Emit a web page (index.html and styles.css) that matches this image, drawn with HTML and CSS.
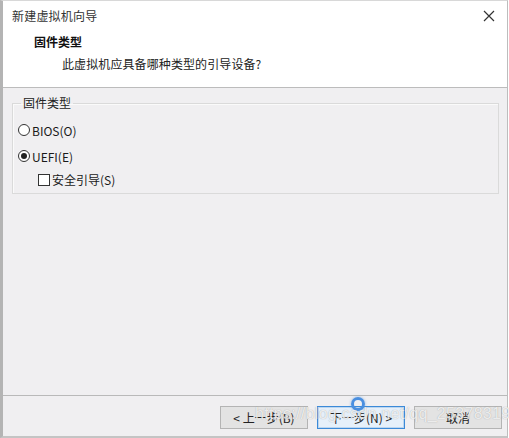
FILE: index.html
```html
<!DOCTYPE html>
<html lang="zh-CN">
<head>
<meta charset="utf-8">
<title>新建虚拟机向导</title>
<link rel="stylesheet" href="styles.css">
</head>
<body>
<div class="window">
  <div class="titlebar">
    <span class="title">新建虚拟机向导</span>
    <svg class="close" width="12" height="12" viewBox="0 0 12 12"><path d="M1 1 L11 11 M11 1 L1 11" stroke="#333" stroke-width="1.2" fill="none"/></svg>
  </div>
  <div class="header">
    <div class="h-title">固件类型</div>
    <div class="h-sub">此虚拟机应具备哪种类型的引导设备?</div>
  </div>
  <div class="content">
    <fieldset class="group">
      <legend>固件类型</legend>
      <div class="opt"><span class="radio"></span>BIOS(O)</div>
      <div class="opt"><span class="radio checked"></span>UEFI(E)</div>
      <div class="opt sub"><span class="check"></span>安全引导(S)</div>
    </fieldset>
  </div>
  <div class="footer">
    <button class="btn">&lt; 上一步(B)</button>
    <button class="btn primary">下一步(N) &gt;</button>
    <button class="btn">取消</button>
    <span class="cursor"></span>
    <span class="watermark">https://blog.csdn.net/qq_25378319</span>
  </div>
</div>
</body>
</html>
```

FILE: styles.css
```css
* { box-sizing: border-box; }
html, body { margin: 0; padding: 0; }
body {
  width: 509px;
  height: 438px;
  overflow: hidden;
  background: #ffffff;
  font-family: "Noto Sans CJK SC", "Noto Sans", sans-serif;
  font-size: 12px;
  color: #1a1a1a;
}
.window {
  width: 508px;
  height: 438px;
  display: flex;
  flex-direction: column;
  border-left: 3px solid #b4b4b4;
  border-right: 1px solid #bdbdbd;
  border-bottom: 2px solid #c4c4c4;
  border-top: 1px solid #d8d8d8;
  background: #f0eff1;
}
.titlebar {
  height: 29px;
  background: #fff;
  display: flex;
  align-items: center;
  justify-content: space-between;
  padding: 0 12px 0 9px;
}
.title { font-size: 12px; color: #333; letter-spacing: 0.2px; }
.close { display: block; }
.header {
  height: 58px;
  background: #fff;
  border-bottom: 1px solid #bcbcbc;
  padding: 4px 0 0 29px;
}
.h-title { font-weight: bold; font-size: 12px; line-height: 16px; color: #111; margin-left: 2px; }
.h-sub { font-size: 12px; line-height: 16px; margin-top: 6px; margin-left: 30px; color: #222; letter-spacing: 0.1px; }
.content {
  flex: 1;
  padding: 7px 8px 0 9px;
  border-bottom: 1px solid #b9b9b9;
}
.group {
  margin: 0;
  padding: 6px 6px 3px 5px;
  height: 99px;
  border: 1px solid #dadada;
  box-shadow: inset 1px 1px 0 #fafafa;
}
.group legend {
  padding: 0 2px;
  margin-left: 3px;
  font-size: 12px;
  line-height: 16px;
  color: #222;
}
.opt {
  display: flex;
  align-items: center;
  height: 26px;
  font-size: 12px;
  color: #1a1a1a;
}
.opt.sub { height: 21px; padding-left: 20px; }
.radio {
  width: 12px;
  height: 12px;
  border: 1px solid #333;
  border-radius: 50%;
  background: #fff;
  margin-right: 2px;
  display: flex;
  align-items: center;
  justify-content: center;
}
.radio.checked::after {
  content: "";
  width: 6px;
  height: 6px;
  border-radius: 50%;
  background: #222;
}
.check {
  width: 12px;
  height: 12px;
  border: 1px solid #333;
  background: #fff;
  margin-right: 2px;
}
.footer {
  height: 40px;
  position: relative;
  display: flex;
  justify-content: flex-end;
  align-items: flex-start;
  gap: 9px;
  padding: 10px 5px 0 0;
}
.btn {
  width: 88px;
  height: 23px;
  font-family: inherit;
  font-size: 12px;
  color: #222;
  background: #e3e3e3;
  border: 1px solid #b4b4b4;
  padding: 0;
  margin: 0;
}
.btn.primary {
  background: #e6f0fa;
  border: 1px solid #3c8ad8;
  box-shadow: inset 0 0 0 1px #bcd6f0;
}
.cursor {
  position: absolute;
  left: 348px;
  top: 1px;
  width: 14px;
  height: 14px;
  border-radius: 50%;
  border: 3px solid #4a8fe0;
  box-shadow: 0 0 3px rgba(74, 143, 224, 0.6);
}
.watermark {
  position: absolute;
  left: 252px;
  top: 9px;
  font-family: "Liberation Sans", Arial, sans-serif;
  font-size: 16px;
  letter-spacing: 0.3px;
  color: rgba(255, 255, 255, 0.8);
  text-shadow: 0 0 1px rgba(110, 110, 110, 0.6);
  pointer-events: none;
}
```
